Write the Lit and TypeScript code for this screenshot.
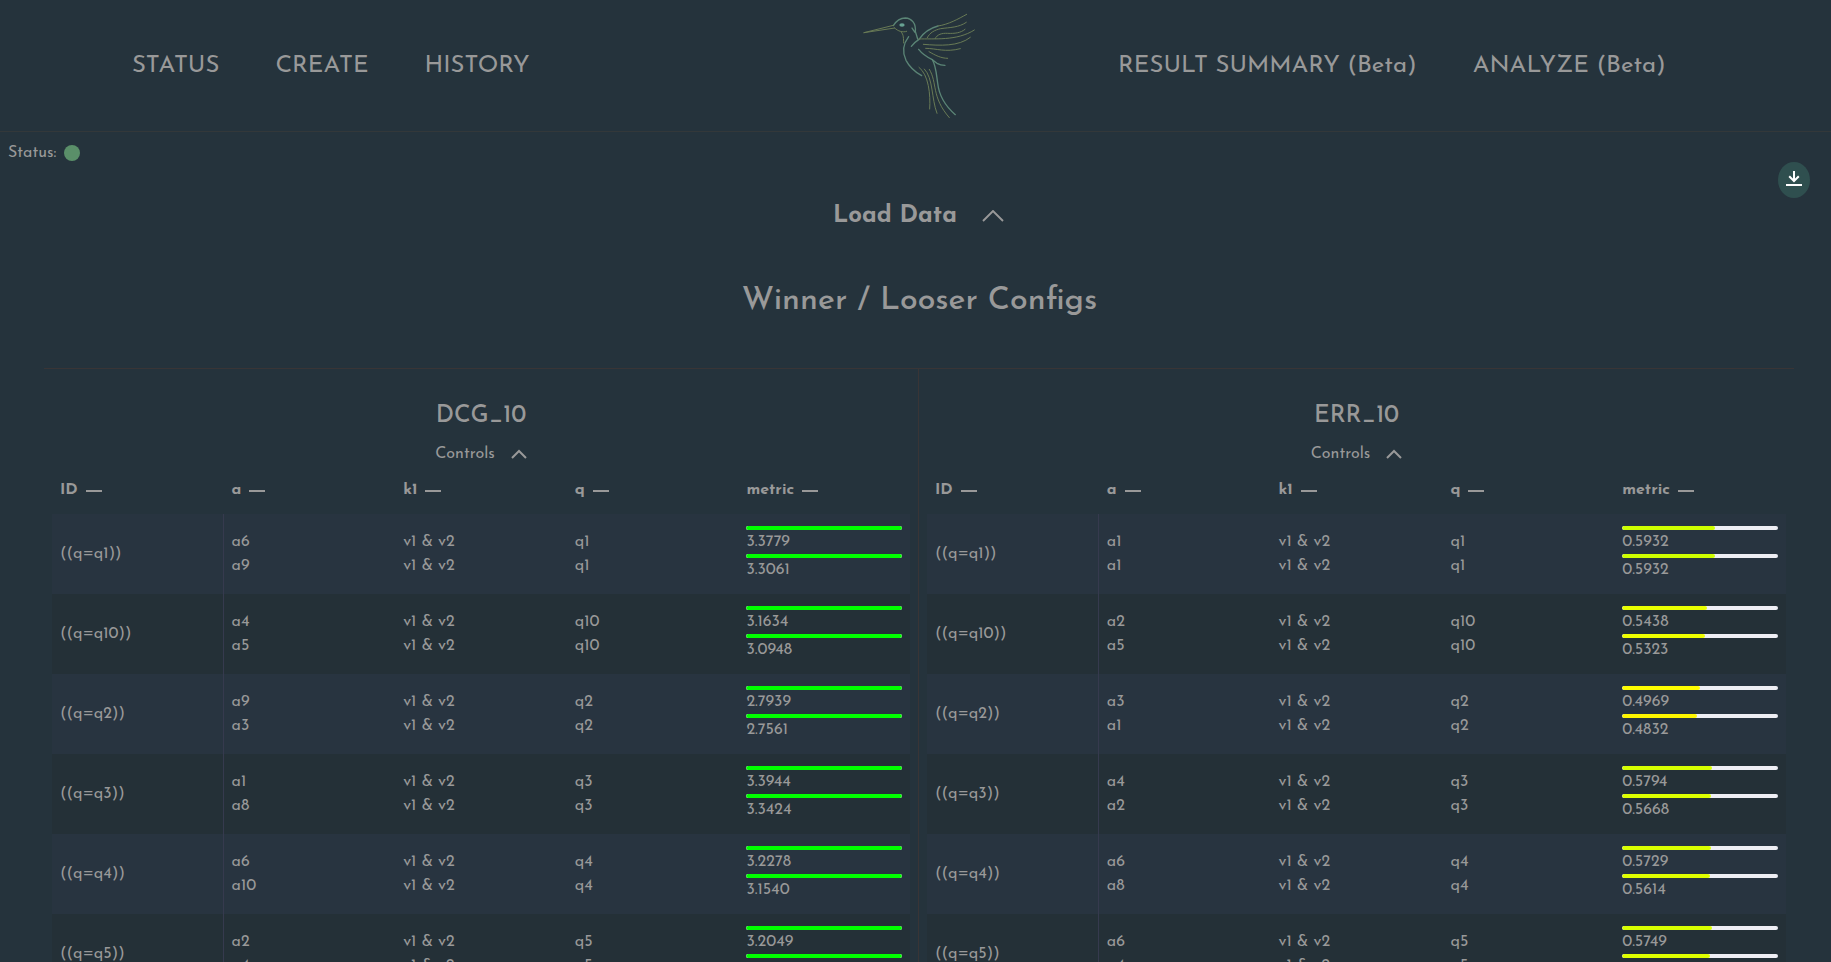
import { LitElement, html, css, svg } from "lit";
import { customElement, property } from "lit/decorators.js";

type Hit = { a: string; value: string };
type Row = { q: string; hits: [Hit, Hit] };

const row = (q: string, a1: string, v1: string, a2: string, v2: string): Row => ({
  q,
  hits: [
    { a: a1, value: v1 },
    { a: a2, value: v2 },
  ],
});

const DCG: Row[] = [
  row("q1", "a6", "3.3779", "a9", "3.3061"),
  row("q10", "a4", "3.1634", "a5", "3.0948"),
  row("q2", "a9", "2.7939", "a3", "2.7561"),
  row("q3", "a1", "3.3944", "a8", "3.3424"),
  row("q4", "a6", "3.2278", "a10", "3.1540"),
  row("q5", "a2", "3.2049", "a4", "3.1512"),
];

const ERR: Row[] = [
  row("q1", "a1", "0.5932", "a1", "0.5932"),
  row("q10", "a2", "0.5438", "a5", "0.5323"),
  row("q2", "a3", "0.4969", "a1", "0.4832"),
  row("q3", "a4", "0.5794", "a2", "0.5668"),
  row("q4", "a6", "0.5729", "a8", "0.5614"),
  row("q5", "a6", "0.5749", "a4", "0.5625"),
];

/** Red to yellow to green scale over 0..1. */
function scaleColor(v: number): string {
  const c = Math.min(1, v);
  const r = Math.round(255 * Math.min(1, 2 * (1 - c)));
  const g = Math.round(255 * Math.min(1, 2 * c));
  return `rgb(${r}, ${g}, 0)`;
}

@customElement("metric-panel")
export class MetricPanel extends LitElement {
  @property() heading = "";
  @property({ attribute: false }) rows: Row[] = [];

  static styles = css`
    :host { display: block; padding: 0 8px; box-sizing: border-box; }
    .title { height: 62px; padding-top: 18px; box-sizing: border-box; margin-top: 14px; text-align: center; font-size: 24px; font-weight: 500; line-height: 30px; }
    .controls { display: flex; justify-content: center; align-items: center; height: 24px; margin-top: -3px; gap: 16px; line-height: 24px; }
    .line { display: grid; grid-template-columns: repeat(5, minmax(0, 1fr)); }
    .head { height: 48px; font-weight: 700; line-height: 24px; padding-top: 13px; box-sizing: border-box; }
    .th { display: flex; gap: 8px; padding-left: 8px; align-items: center; height: 24px; }
    .label { padding-bottom: 2px; }
    .dash { width: 16px; height: 2px; background: #999; }
    .row { height: 80px; background: #243037; line-height: 24px; }
    .row:nth-child(odd) { background: #283440; }
    .id { padding-left: 8px; display: flex; align-items: center; border-right: 1px solid #363a4e; }
    .cell { padding: 16px 0 0 8px; }
    .metric { padding: 12px 8px 0; }
    .track { height: 4px; border-radius: 2px; background: #eeeef4; overflow: hidden; }
    .fill { height: 4px; border-radius: 2px; }
    .value { line-height: 24px; height: 24px; }
  `;

  private head(label: string) {
    return html`<div class="th"><span class="label">${label}</span><span class="dash"></span></div>`;
  }

  render() {
    return html`
      <div class="title">${this.heading}</div>
      <div class="controls">
        <span>Controls</span>
        <svg width="16" height="10" viewBox="0 0 16 10"><path d="M1 9 8 2l7 7" fill="none" stroke="#999" stroke-width="2" /></svg>
      </div>
      <div class="line head">${["ID", "a", "k1", "q", "metric"].map((l) => this.head(l))}</div>
      <div>
        ${this.rows.map(
          (r) => html`<div class="line row">
            <div class="id">((q=${r.q}))</div>
            <div class="cell">${r.hits.map((h) => html`<div>${h.a}</div>`)}</div>
            <div class="cell">${r.hits.map(() => html`<div>v1 &amp; v2</div>`)}</div>
            <div class="cell">${r.hits.map(() => html`<div>${r.q}</div>`)}</div>
            <div class="metric">
              ${r.hits.map((h) => {
                const v = Number(h.value);
                return html`<div class="track">
                    <div class="fill" style="width:${Math.min(1, v) * 100}%;background:${scaleColor(v)}"></div>
                  </div>
                  <div class="value">${h.value}</div>`;
              })}
            </div>
          </div>`
        )}
      </div>
    `;
  }
}

const bird = svg`
  <g fill="none" stroke-linecap="round" stroke-linejoin="round" transform="scale(0.33333)">
    <g stroke="#5b8576" stroke-width="4">
      <path d="M160 77C168 64 181 54 196 54C216 55 228 71 226 94L233 117" />
      <path d="M216 84C220 91 224 95 226 98" />
      <path d="M206 110C190 131 185 154 198 181C209 202 227 217 245 227" />
      <path d="M214 139C221 130 229 123 237 118C250 99 271 84 294 78" />
      <path d="M236 148C246 161 261 171 277 179L291 190C298 194 306 196 315 196" />
      <path d="M277 179C288 198 289 222 293 249C297 286 318 320 346 344" />
    </g>
    <g stroke="#687a55" stroke-width="3">
      <path d="M72 98 160 76M72 98 164 84M164 84C174 94 188 98 200 94M183 96C192 103 190 117 191 129" />
      <path d="M294 78C327 73 354 57 380 43" />
      <path d="M262 113C269 98 284 90 302 86C330 82 356 83 379 67" />
      <path d="M285 116C292 103 305 99 323 100C344 101 362 99 375 88" />
      <path d="M237 117C281 115 350 124 403 90" />
      <path d="M250 133C300 137 356 140 391 112" />
      <path d="M257 145C289 145 316 158 361 146" />
      <path d="M267 155C286 166 303 175 323 175" />
      <path d="M237 202C266 224 272 284 269 327" />
      <path d="M253 207C280 234 274 296 291 340" />
      <path d="M268 208C293 249 273 290 328 353" />
    </g>
    <ellipse cx="186" cy="75" rx="8" ry="5" fill="#67a292" />
  </g>`;

@customElement("app-root")
export class AppRoot extends LitElement {
  static styles = css`
    :host { display: block; height: 962px; overflow: hidden; background: #25333c; color: #999; font-family: "Josefin Sans", Lato, sans-serif; font-size: 16px; }
    header { height: 132px; box-sizing: border-box; border-bottom: 1px solid #33383a; display: grid; grid-template-columns: 840px 160px 1fr; }
    nav { display: flex; align-items: center; font-size: 24px; line-height: 30px; }
    .left { padding-left: 132px; gap: 56px; }
    .right { padding-left: 118px; gap: 56px; }
    nav span { white-space: nowrap; }
    .status { display: flex; align-items: center; height: 24px; padding: 9px 0 0 8px; gap: 8px; }
    .dot { width: 16px; height: 16px; border-radius: 50%; background: #5a8f69; }
    .tools { display: flex; justify-content: flex-end; height: 36px; margin-top: -3px; padding-right: 21px; }
    .download { width: 32px; height: 36px; border-radius: 50%; background: #2f4f4f; display: grid; place-items: center; }
    .load { display: flex; justify-content: center; align-items: center; gap: 25px; height: 30px; margin-top: 3px; font-size: 24px; font-weight: 700; padding-left: 6px; }
    h1 { margin: 0; height: 137px; padding-top: 50px; box-sizing: border-box; text-align: center; font-size: 32px; font-weight: 500; line-height: 40px; padding-left: 8px; }
    .panels { margin: 0 37px 0 44px; display: grid; grid-template-columns: 875px 875px; border-top: 1px solid #393536; }
    .panels > :first-child { border-right: 1px solid #393536; }
  `;

  render() {
    return html`
      <header>
        <nav class="left"><span>STATUS</span><span>CREATE</span><span>HISTORY</span></nav>
        <svg width="160" height="130" viewBox="0 0 160 130">${bird}</svg>
        <nav class="right"><span>RESULT SUMMARY (Beta)</span><span>ANALYZE (Beta)</span></nav>
      </header>
      <div class="status"><span>Status:</span><span class="dot"></span></div>
      <div class="tools">
        <div class="download">
          <svg width="16" height="18" viewBox="0 0 16 18" fill="none" stroke="#fff" stroke-width="2">
            <path d="M8 0v10M3.200 5.200 8 10l4.800-4.800M0 14h16" />
          </svg>
        </div>
      </div>
      <div class="load">
        <span>Load Data</span>
        <svg width="22" height="13" viewBox="0 0 22 13"><path d="M1 11 11 1l10 10" fill="none" stroke="#999" stroke-width="1.900" /></svg>
      </div>
      <h1>Winner / Looser Configs</h1>
      <div class="panels">
        <metric-panel heading="DCG_10" .rows=${DCG}></metric-panel>
        <metric-panel heading="ERR_10" .rows=${ERR}></metric-panel>
      </div>
    `;
  }
}
